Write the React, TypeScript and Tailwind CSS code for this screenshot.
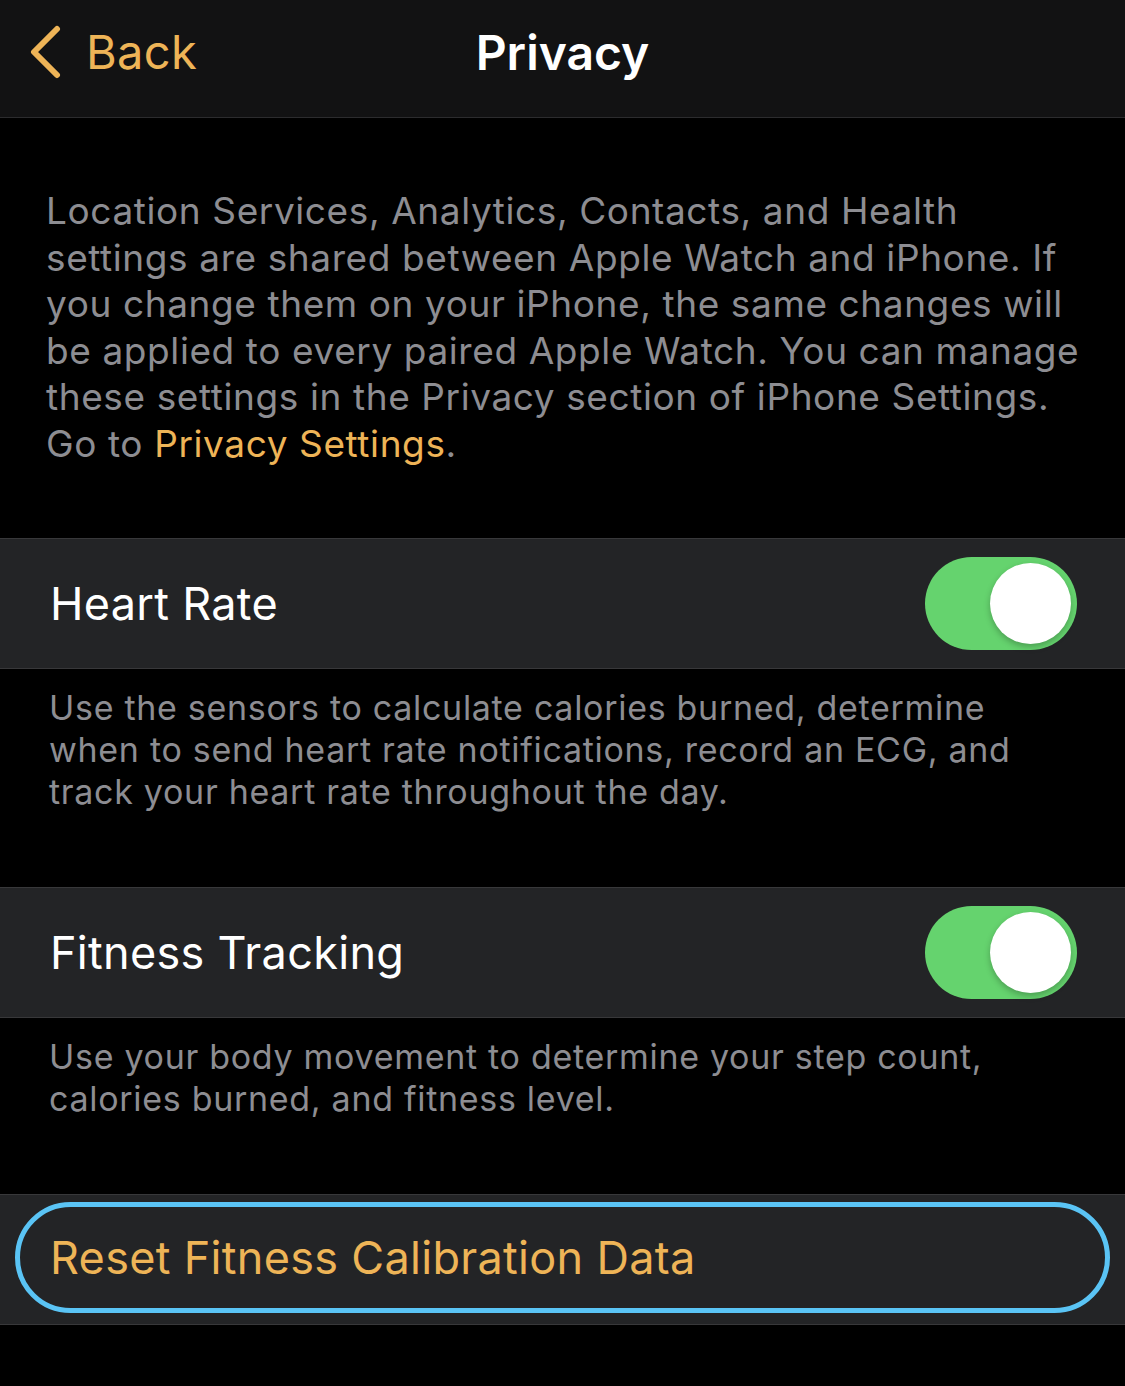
import React from 'react';

const font = { fontFamily: 'Inter, "Noto Sans", sans-serif' };

function Toggle({ on }: { on: boolean }) {
  return (
    <div
      className={`flex h-[93px] w-[152px] items-center rounded-full p-[6px] ${
        on ? 'justify-end bg-[#65d36e]' : 'justify-start bg-[#3a3a3c]'
      }`}
    >
      <div className="h-[81px] w-[81px] rounded-full bg-white shadow-[0_3px_6px_rgba(0,0,0,0.25)]" />
    </div>
  );
}

function ToggleRow({ label, note }: { label: string; note: string }) {
  const [on, setOn] = React.useState(true);
  return (
    <>
      <div
        className="flex h-[131px] items-center justify-between border-y border-[#38383a] bg-[#232426] pl-[50px] pr-[48px]"
        onClick={() => setOn(v => !v)}
      >
        <span className="text-[45px] tracking-[0.3px] text-white">{label}</span>
        <Toggle on={on} />
      </div>
      <p className="pb-[74px] pl-[49px] pr-[75px] pt-[18px] text-[34px] leading-[42px] tracking-[0.7px] text-[#8d8d92]">
        {note}
      </p>
    </>
  );
}

export default function App() {
  return (
    <div className="min-h-[1386px] w-[1125px] bg-black" style={font}>
      <header className="relative flex h-[118px] items-center border-b border-[#2c2c2e] bg-[#121213] pb-[12px]">
        <div className="flex items-center pl-[26px] text-[#eeb457]">
          <svg width="38" height="56" viewBox="0 0 38 56" fill="none">
            <path d="M31 4 L8 27 L31 50" stroke="currentColor" strokeWidth="6" strokeLinecap="round" strokeLinejoin="round" />
          </svg>
          <span className="ml-[22px] text-[47px] tracking-[0.3px]">Back</span>
        </div>
        <h1 className="absolute left-1/2 top-[17px] -translate-x-1/2 text-[48px] font-semibold text-white">Privacy</h1>
      </header>

      <p className="pb-[71px] pl-[46px] pr-[20px] pt-[70px] text-[37px] leading-[46.5px] tracking-[0.6px] text-[#8d8d92]">
        Location Services, Analytics, Contacts, and Health settings are shared between Apple Watch and iPhone. If
        you change them on your iPhone, the same changes will be applied to every paired Apple Watch. You can manage
        these settings in the Privacy section of iPhone Settings. Go to{' '}
        <span className="text-[#eeb457]">Privacy Settings</span>.
      </p>

      <ToggleRow
        label="Heart Rate"
        note="Use the sensors to calculate calories burned, determine when to send heart rate notifications, record an ECG, and track your heart rate throughout the day."
      />
      <ToggleRow
        label="Fitness Tracking"
        note="Use your body movement to determine your step count, calories burned, and fitness level."
      />

      <div className="flex h-[131px] items-start border-y border-[#38383a] bg-[#232426] px-[15px] pt-[7px]">
        <button className="flex h-[111px] w-full items-center rounded-full border-[5px] border-[#5ac4f5] pl-[30px] text-left text-[45px] tracking-[0.3px] text-[#eeb457]">
          Reset Fitness Calibration Data
        </button>
      </div>
    </div>
  );
}
